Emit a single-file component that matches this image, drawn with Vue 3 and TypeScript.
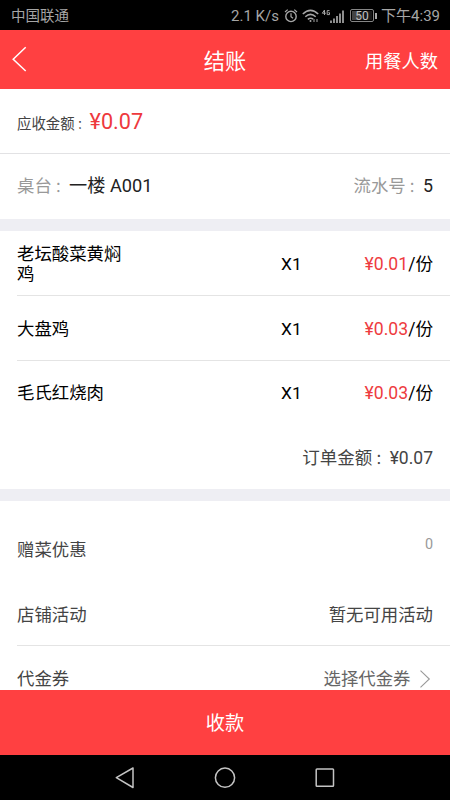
<script setup lang="ts">
interface Dish {
  name: string
  count: number
  price: string
}

const dishes: Dish[] = [
  { name: '老坛酸菜黄焖鸡', count: 1, price: '0.01' },
  { name: '大盘鸡', count: 1, price: '0.03' },
  { name: '毛氏红烧肉', count: 1, price: '0.03' },
]
</script>

<template>
  <div class="screen">
    <div class="status">
      <span class="carrier">中国联通</span>
      <span class="speed">2.1 K/s</span>
      <svg class="alarm" width="14" height="16" viewBox="0 0 14 16" fill="none" stroke="#a6a6a6">
        <circle cx="7" cy="8.4" r="5.2" stroke-width="1.4" />
        <path d="M7 5.2v3.4l2 1.7M1 4 3.7 1.6M13 4l-2.7-2.4" stroke-width="1.2" />
      </svg>
      <svg class="wifi" width="17" height="14" viewBox="0 0 17 14" fill="none" stroke="#a6a6a6" stroke-width="1.5">
        <path d="M.8 5Q8.5-2.3 16.2 5M3.3 7.7q5.2-4.6 10.4 0M5.8 10.3q2.7-2.2 5.4-.2" />
        <circle cx="8.5" cy="12" r="1" fill="#a6a6a6" stroke="none" />
        <path d="M12 10v3M15 10v3" stroke-width="1" />
      </svg>
      <svg class="signal" width="24" height="16" viewBox="0 0 24 16" fill="none" stroke="#a6a6a6">
        <path d="M3.5 7V2L1.3 5.2H4.8M8.5 2.6H6.2v4h2.3V4.7H7.4" stroke-width="1" />
        <path d="M10 12.5V15M13 10.5V15M16 8v7M19 5.5V15M22 2.5V15" stroke-width="1.7" />
      </svg>
      <span class="battery"><span class="level">50</span></span>
      <span class="clock">下午4:39</span>
    </div>

    <header class="header">
      <svg class="back" width="16" height="26" viewBox="0 0 16 26" fill="none" stroke="#fff" stroke-width="1.5">
        <path d="M13.7 1.3 1.2 13.2 13.7 25" />
      </svg>
      <h1 class="title">结账</h1>
      <span class="guests">用餐人数</span>
    </header>

    <main class="content">
      <div class="due">
        <span class="due-label">应收金额<span class="colon">：</span></span>
        <span class="due-value">¥0.07</span>
      </div>
      <div class="table-row">
        <span><span class="muted">桌台<span class="colon">：</span></span><span class="table-name">一楼 A001</span></span>
        <span><span class="muted">流水号<span class="colon">：</span></span><span class="serial">5</span></span>
      </div>

      <section class="dishes">
        <div v-for="dish in dishes" :key="dish.name" class="dish">
          <span class="dish-name">{{ dish.name }}</span>
          <span class="dish-count">X{{ dish.count }}</span>
          <span class="dish-price"><span class="red">¥{{ dish.price }}</span>/份</span>
        </div>
        <div class="total">订单金额<span class="colon">：</span>¥0.07</div>
      </section>

      <section class="offers">
        <div class="offer gift"><span>赠菜优惠</span><span class="zero">0</span></div>
        <div class="offer shop"><span>店铺活动</span><span>暂无可用活动</span></div>
        <div class="offer coupon">
          <span>代金券</span>
          <span class="choose">选择代金券
            <svg width="12" height="18" viewBox="0 0 12 18" fill="none" stroke="#999" stroke-width="1.1">
              <path d="M1.5 .7 10.3 9 1.5 17.3" />
            </svg>
          </span>
        </div>
      </section>
    </main>

    <button class="pay" type="button">收款</button>

    <nav class="nav">
      <svg width="22" height="24" viewBox="0 0 22 24" fill="none" stroke="#c4c4c4" stroke-width="1.5" stroke-linejoin="round">
        <path d="M19 2v19.500L2.300 11.700z" />
      </svg>
      <svg width="22" height="24" viewBox="0 0 22 24" fill="none" stroke="#c4c4c4" stroke-width="1.5">
        <circle cx="11" cy="11.7" r="9.6" />
      </svg>
      <svg width="22" height="24" viewBox="0 0 22 24" fill="none" stroke="#c4c4c4" stroke-width="1.5">
        <rect x="2.2" y="3" width="17.3" height="17.3" rx=".8" />
      </svg>
    </nav>
  </div>
</template>

<style>
body {
  margin: 0;
}
</style>

<style scoped>
.screen {
  display: flex;
  flex-direction: column;
  width: 450px;
  height: 800px;
  overflow: hidden;
  background: #fff;
  color: #222;
  font: 17.4px/20px Roboto, "Noto Sans CJK SC", sans-serif;
  white-space: nowrap;
}

.status {
  display: flex;
  flex: none;
  align-items: center;
  box-sizing: border-box;
  height: 30px;
  padding: 1px 10px 0 11px;
  background: #000;
  color: #a6a6a6;
  font-size: 14.5px;
}

.carrier {
  flex: 1;
  padding-top: 2px;
}

.speed {
  width: 53px;
  font-size: 15px;
}

.wifi {
  margin-left: 4px;
}

.signal {
  margin-left: 2px;
}

.battery {
  display: flex;
  position: relative;
  box-sizing: border-box;
  width: 24px;
  height: 13px;
  margin: 0 7px 0 5px;
  padding: 1px;
  border: 1px solid #858585;
  border-radius: 2px;
}

.battery::after {
  content: "";
  position: absolute;
  top: 3px;
  right: -4px;
  width: 2px;
  height: 6px;
  background: #a6a6a6;
}

.level {
  width: 100%;
  background: linear-gradient(90deg, #444 40%, #181818 40%);
  color: #c0c0c0;
  font-size: 12px;
  line-height: 10px;
  text-align: center;
}

.clock {
  font-size: 15px;
}

.header {
  display: grid;
  flex: none;
  grid-template-columns: 1fr auto 1fr;
  align-items: center;
  height: 58.5px;
  padding: 0 12px;
  background: #ff4041;
  color: #fff;
}

.title {
  margin: 0;
  padding-top: 5px;
  font-size: 21.2px;
  font-weight: 400;
  line-height: 30px;
}

.guests {
  justify-self: end;
  padding-top: 5px;
  font-size: 18.3px;
}

.content {
  flex: 1;
  min-height: 0;
  overflow: hidden;
}

.colon {
  margin-left: .2em;
  font-size: .83em;
}

.due {
  display: flex;
  align-items: baseline;
  box-sizing: border-box;
  height: 65px;
  padding: 20px 17px 0;
  border-bottom: 1px solid #e2e2e4;
}

.due-label {
  width: 72.5px;
  color: #444;
  font-size: 14.4px;
}

.due-value {
  color: #ee393d;
  font-size: 21.7px;
  line-height: 26px;
}

.table-row {
  display: flex;
  align-items: center;
  justify-content: space-between;
  height: 64px;
  padding: 1px 17px 0;
}

.muted {
  color: #999;
}

.table-name {
  font-size: 18.2px;
}

.serial {
  font-size: 17.8px;
}

.dishes {
  border-top: 12px solid #eeeef3;
  color: #000;
}

.dish {
  display: grid;
  grid-template-columns: 264px 1fr auto;
  align-items: center;
  box-sizing: border-box;
  height: 65.3px;
  margin-left: 17px;
  padding: 2px 17px 0 0;
  border-bottom: 1px solid #e4e4e4;
}

.dish:nth-child(3) {
  height: 64px;
  padding-top: 0;
  border-bottom: 0;
}

.dish-name {
  width: 106px;
  white-space: normal;
}

.dish-price {
  font-size: 17.6px;
}

.red {
  color: #ee3b40;
}

.total {
  height: 64px;
  padding-right: 17px;
  color: #444;
  font-size: 17.5px;
  line-height: 66px;
  text-align: right;
}

.offers {
  border-top: 12px solid #eeeef3;
  color: #444;
}

.offer {
  display: flex;
  align-items: center;
  justify-content: space-between;
  box-sizing: border-box;
  margin-left: 17px;
  padding-right: 17px;
}

.gift {
  height: 96px;
  padding-top: 2px;
}

.zero {
  margin-bottom: 10px;
  color: #999;
  font-size: 14.4px;
}

.shop {
  height: 49px;
  padding-bottom: 13px;
  border-bottom: 1px solid #e4e4e4;
}

.coupon {
  height: 66px;
}

.choose {
  display: flex;
  align-items: center;
  gap: 8px;
  margin-right: 2.5px;
  color: #666;
}

.pay {
  flex: none;
  height: 65px;
  padding: 3px 0 0;
  border: 0;
  background: #ff4041;
  color: #fff;
  font: 19.2px/62px Roboto, "Noto Sans CJK SC", sans-serif;
}

.nav {
  display: flex;
  flex: none;
  align-items: center;
  justify-content: center;
  gap: 78px;
  height: 45px;
  background: #000;
}
</style>
